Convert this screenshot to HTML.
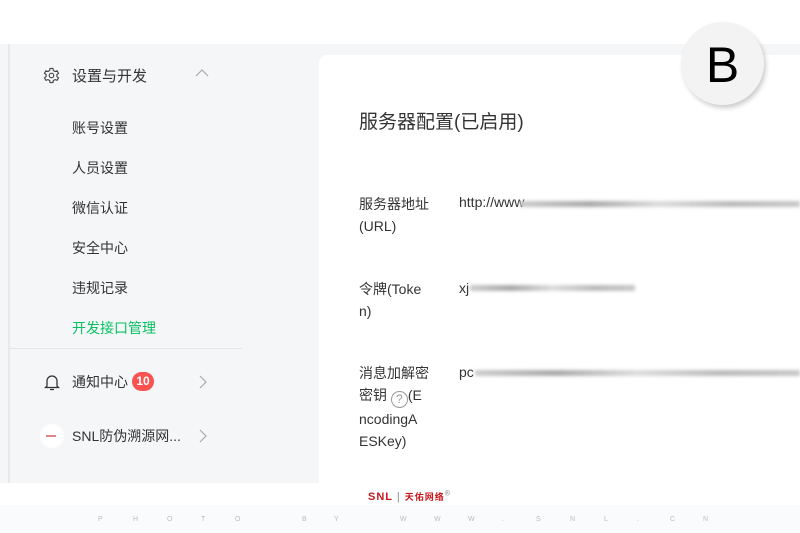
<!DOCTYPE html>
<html><head><meta charset="utf-8"><style>
*{margin:0;padding:0;box-sizing:border-box}
body{width:800px;height:533px;overflow:hidden;background:#fff;font-family:"Liberation Sans","Noto Sans CJK SC",sans-serif;position:relative;color:#333}
.a{position:absolute}
.side{left:0;top:44px;width:800px;height:439px;background:#f5f6f8}
.lb{left:8px;top:44px;width:2px;height:439px;background:#e8e9eb}
.card{left:319px;top:55px;width:481px;height:428px;background:#fff;border-radius:8px 0 0 0}
.t{font-size:14px;color:#333}
.blur{height:6px;background:linear-gradient(90deg,#ccc,#aaa,#ddd,#bbb,#c8c8c8);filter:blur(1.5px)}
.wm{top:505px;left:0;width:800px;height:28px;background:#fafbfc;font-size:7px;color:#bbb}
.wm span{position:absolute;top:11px}
</style></head><body>
<div class="a side"></div>
<div class="a lb"></div>
<div class="a card"></div>
<svg class="a" style="left:43px;top:67px" width="17" height="17" viewBox="0 0 24 24" fill="none" stroke="#444" stroke-width="1.6"><path d="M10 2h4l.6 3 2.4 1.4 2.9-1 2 3.4-2.3 2v2.6l2.3 2-2 3.4-2.9-1L14.6 19 14 22h-4l-.6-3L7 17.8l-2.9 1-2-3.4 2.3-2v-2.6l-2.3-2 2-3.4 2.9 1L9.4 5z"/><circle cx="12" cy="12" r="3.2"/></svg>
<div class="a t" style="left:72px;top:65px;font-size:15px">设置与开发</div>
<svg class="a" style="left:195px;top:68px" width="14" height="10"><path d="M1 8l6-6 6 6" fill="none" stroke="#aaa" stroke-width="1.2"/></svg>
<div class="a t" style="left:72px;top:118px">账号设置</div>
<div class="a t" style="left:72px;top:158px">人员设置</div>
<div class="a t" style="left:72px;top:198px">微信认证</div>
<div class="a t" style="left:72px;top:238px">安全中心</div>
<div class="a t" style="left:72px;top:278px">违规记录</div>
<div class="a t" style="left:72px;top:318px;color:#07c160">开发接口管理</div>
<div class="a" style="left:10px;top:348px;width:232px;height:1px;background:#e5e6e8"></div>
<svg class="a" style="left:44px;top:373px" width="16" height="18" viewBox="0 0 16 18" fill="none" stroke="#333" stroke-width="1.3"><path d="M3 13V8a5 5 0 0110 0v5l1.5 1.5h-13z"/><path d="M6 16.5h4"/></svg>
<div class="a t" style="left:72px;top:372px">通知中心</div>
<div class="a" style="left:132px;top:372px;width:22px;height:19px;border-radius:10px;background:#fa5151;color:#fff;font-size:12px;font-weight:bold;text-align:center;line-height:19px">10</div>
<svg class="a" style="left:198px;top:375px" width="10" height="14"><path d="M2 1l6 6-6 6" fill="none" stroke="#aaa" stroke-width="1.2"/></svg>
<div class="a" style="left:40px;top:424px;width:24px;height:24px;border-radius:50%;background:#fff"><div style="margin:11px 6px;width:10px;height:2px;background:#d88"></div></div>
<div class="a t" style="left:72px;top:426px">SNL防伪溯源网...</div>
<svg class="a" style="left:198px;top:429px" width="10" height="14"><path d="M2 1l6 6-6 6" fill="none" stroke="#aaa" stroke-width="1.2"/></svg>
<div class="a" style="left:359px;top:107px;font-size:19px;color:#333">服务器配置(已启用)</div>
<div class="a t" style="left:359px;top:193px;line-height:22px">服务器地址<br>(URL)</div>
<div class="a t" style="left:459px;top:194px">http://www</div>
<div class="a blur" style="left:520px;top:201px;width:280px"></div>
<div class="a t" style="left:359px;top:278px;line-height:22px">令牌(Toke<br>n)</div>
<div class="a t" style="left:459px;top:280px">xj</div>
<div class="a blur" style="left:470px;top:285px;width:165px"></div>
<div class="a t" style="left:359px;top:362px;line-height:22px">消息加解密<br>密钥 <span style="display:inline-block;width:17px;height:17px;border:1px solid #999;border-radius:50%;font-size:12px;text-align:center;line-height:15px;color:#999;vertical-align:-3px">?</span>(E<br>ncodingA<br>ESKey)</div>
<div class="a t" style="left:459px;top:364px">pc</div>
<div class="a blur" style="left:475px;top:370px;width:325px"></div>
<div class="a" style="left:681px;top:22px;width:83px;height:83px;border-radius:50%;background:#f3f3f4;box-shadow:2px 3px 5px rgba(0,0,0,.2);font-size:50px;color:#000;text-align:center;line-height:86px">B</div>
<div class="a" style="left:368px;top:490px;font-size:11px;font-weight:bold;color:#c8161d;letter-spacing:1px">SNL <span style="font-weight:normal;color:#888">|</span> <span style="font-size:9px">天佑网络</span><sup style="font-size:7px;color:#999">®</sup></div>
<div class="a wm"><span style="left:98px">P</span><span style="left:133px">H</span><span style="left:167px">O</span><span style="left:201px">T</span><span style="left:235px">O</span><span style="left:302px">B</span><span style="left:334px">Y</span><span style="left:400px">W</span><span style="left:434px">W</span><span style="left:468px">W</span><span style="left:502px">.</span><span style="left:536px">S</span><span style="left:570px">N</span><span style="left:604px">L</span><span style="left:637px">.</span><span style="left:670px">C</span><span style="left:703px">N</span></div>
</body></html>
